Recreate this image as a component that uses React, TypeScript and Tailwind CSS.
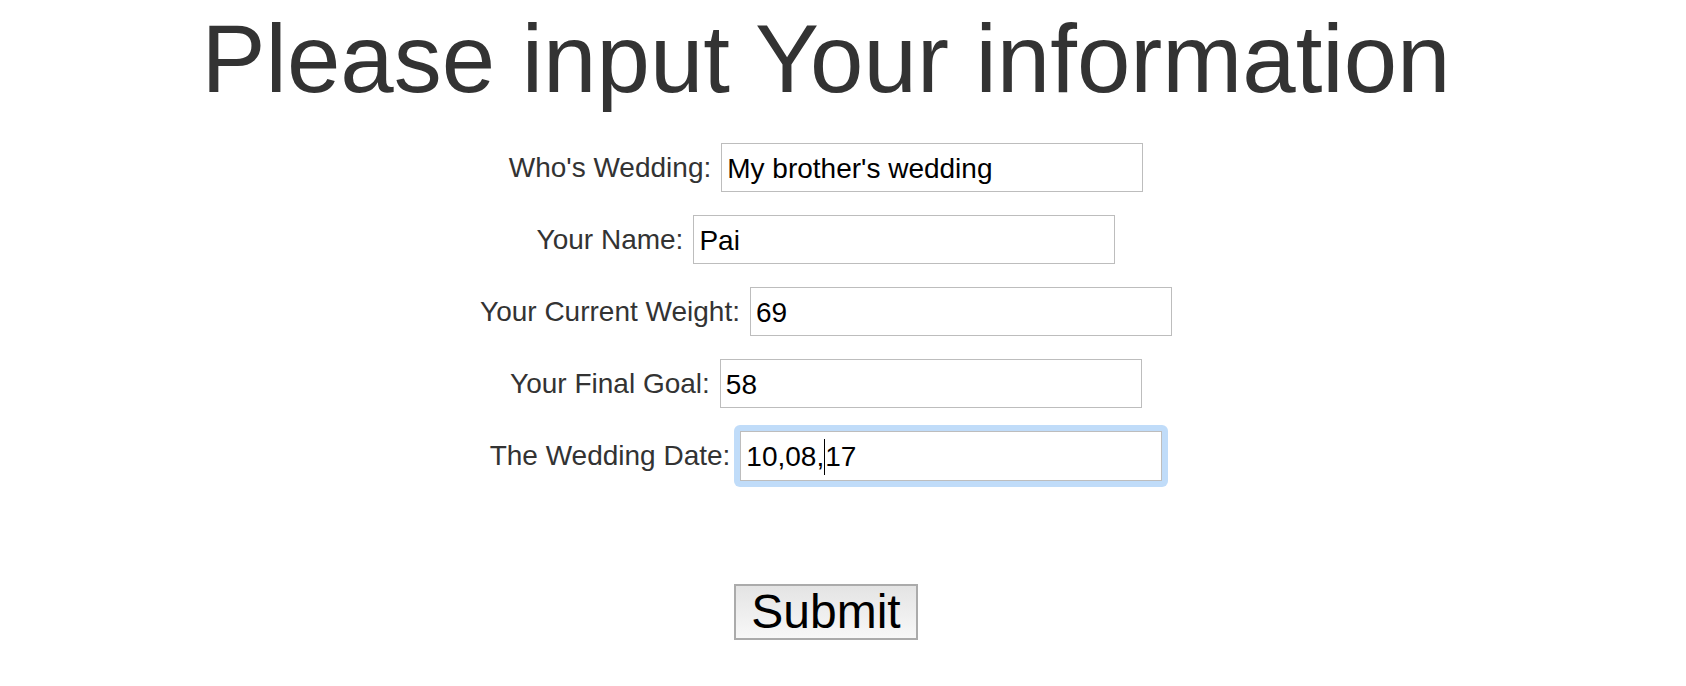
import React from "react";

type Field = {
  label: string;
  value: string;
};

const fields: Field[] = [
  { label: "Who's Wedding:", value: "My brother's wedding" },
  { label: "Your Name:", value: "Pai" },
  { label: "Your Current Weight:", value: "69" },
  { label: "Your Final Goal:", value: "58" },
];

const inputClass =
  "h-[49px] w-[422px] border border-[#bdbdbd] bg-white px-[5px] pt-[2px] text-[28px] text-black outline-none";

export default function App() {
  return (
    <div className="min-h-[686px] w-[1652px] bg-white font-['Liberation_Sans',Arial,sans-serif]">
      <div className="flex flex-col items-center pt-[11px]">
        <h1 className="text-[96px] font-normal leading-none text-[#333333]">
          Please input Your information
        </h1>

        <form
          className="mt-[36px] flex flex-col items-center gap-[23px]"
          onSubmit={(e) => e.preventDefault()}
        >
          {fields.map((f) => (
            <div key={f.label} className="flex items-center gap-[10px]">
              <label className="text-[28px] text-[#333333]">{f.label}</label>
              <input className={inputClass} type="text" defaultValue={f.value} readOnly />
            </div>
          ))}

          {/* focused field, with the caret after "10,08," */}
          <div className="flex items-center gap-[10px]">
            <label className="text-[28px] text-[#333333]">The Wedding Date:</label>
            <div className="-m-[6px] rounded-[6px] bg-[#c0dcf9] p-[6px]">
              <div
                role="textbox"
                className="flex h-[50px] w-[422px] items-center border border-[#bdbdbd] bg-white px-[5px] pt-[2px] text-[28px] text-black"
              >
                <span>10,08,</span>
                <span className="inline-block h-[36px] w-px bg-black" />
                <span>17</span>
              </div>
            </div>
          </div>

          <button
            type="submit"
            className="mt-[80px] flex h-[56px] w-[184px] items-center justify-center border-2 border-[#ababab] bg-gradient-to-b from-[#e4e4e4] to-[#f8f8f8] text-[48px] leading-none text-black"
          >
            Submit
          </button>
        </form>
      </div>
    </div>
  );
}
